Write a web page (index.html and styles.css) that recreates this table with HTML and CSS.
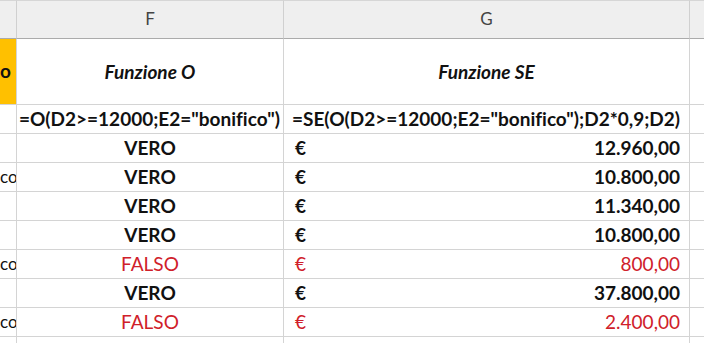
FILE: index.html
```html
<!DOCTYPE html>
<html>
<head>
<meta charset="utf-8">
<link rel="stylesheet" href="styles.css">
</head>
<body>
<div class="sheet">
  <div class="hdr e"></div>
  <div class="hdr f">F</div>
  <div class="hdr g">G</div>
  <div class="hdr h"></div>

  <div class="c e yellow etitle">o</div>
  <div class="c f title">Funzione O</div>
  <div class="c g title">Funzione SE</div>
  <div class="c h"></div>

  <div class="c e"></div>
  <div class="c f formula">=O(D2&gt;=12000;E2="bonifico")</div>
  <div class="c g formula gf">=SE(O(D2&gt;=12000;E2="bonifico");D2*0,9;D2)</div>
  <div class="c h"></div>

  <div class="c e"></div>
  <div class="c f bool">VERO</div>
  <div class="c g money"><span>€</span><span>12.960,00</span></div>
  <div class="c h"></div>

  <div class="c e left">co</div>
  <div class="c f bool">VERO</div>
  <div class="c g money"><span>€</span><span>10.800,00</span></div>
  <div class="c h"></div>

  <div class="c e"></div>
  <div class="c f bool">VERO</div>
  <div class="c g money"><span>€</span><span>11.340,00</span></div>
  <div class="c h"></div>

  <div class="c e"></div>
  <div class="c f bool">VERO</div>
  <div class="c g money"><span>€</span><span>10.800,00</span></div>
  <div class="c h"></div>

  <div class="c e left">co</div>
  <div class="c f bool red">FALSO</div>
  <div class="c g money red"><span>€</span><span>800,00</span></div>
  <div class="c h"></div>

  <div class="c e"></div>
  <div class="c f bool">VERO</div>
  <div class="c g money"><span>€</span><span>37.800,00</span></div>
  <div class="c h"></div>

  <div class="c e left">co</div>
  <div class="c f bool red">FALSO</div>
  <div class="c g money red"><span>€</span><span>2.400,00</span></div>
  <div class="c h"></div>

  <div class="c e last"></div>
  <div class="c f last"></div>
  <div class="c g last"></div>
  <div class="c h last"></div>
</div>
</body>
</html>
```
FILE: styles.css
```css
html, body {
  margin: 0;
  padding: 0;
  background: #ffffff;
}
body {
  width: 704px;
  height: 343px;
  overflow: hidden;
  font-family: Lato, "Liberation Sans", sans-serif;
  font-variant-ligatures: none;
  color: #111111;
}
.sheet {
  display: grid;
  grid-template-columns: 17px 267px 406px 14px;
  grid-template-rows: 39px 66px repeat(8, 29px) 6px;
}
.hdr {
  background: #efefef;
  border-top: 1px solid #d6d6d6;
  border-bottom: 1px solid #ababab;
  border-right: 1px solid #d0d0d0;
  box-sizing: border-box;
  display: flex;
  align-items: center;
  justify-content: center;
  font-size: 17px;
  color: #444444;
  padding-bottom: 2px;
}
.c {
  box-sizing: border-box;
  border-right: 1px solid #d4d4d4;
  border-bottom: 1px solid #d4d4d4;
  display: flex;
  align-items: center;
  overflow: hidden;
  white-space: nowrap;
  font-size: 19px;
  padding-bottom: 2px;
}
.h { border-right: none; }
.last { border-bottom: none; }
.yellow { background: #ffc000; }
.etitle {
  font-weight: 700;
  justify-content: flex-start;
  padding-left: 0;
}
.title {
  justify-content: center;
  font-weight: 700;
  font-style: italic;
  font-size: 19px;
  padding-bottom: 0;
}
.formula {
  font-weight: 700;
  padding-left: 2px;
}
.gf {
  padding-left: 8px;
}
.bool {
  justify-content: center;
  font-weight: 700;
}
.money {
  justify-content: space-between;
  font-weight: 700;
  padding-left: 11px;
  padding-right: 9px;
}
.red {
  color: #d0202a;
  font-weight: 400;
}
.left {
  justify-content: flex-start;
  font-size: 17px;
  padding-left: 0;
}
```
